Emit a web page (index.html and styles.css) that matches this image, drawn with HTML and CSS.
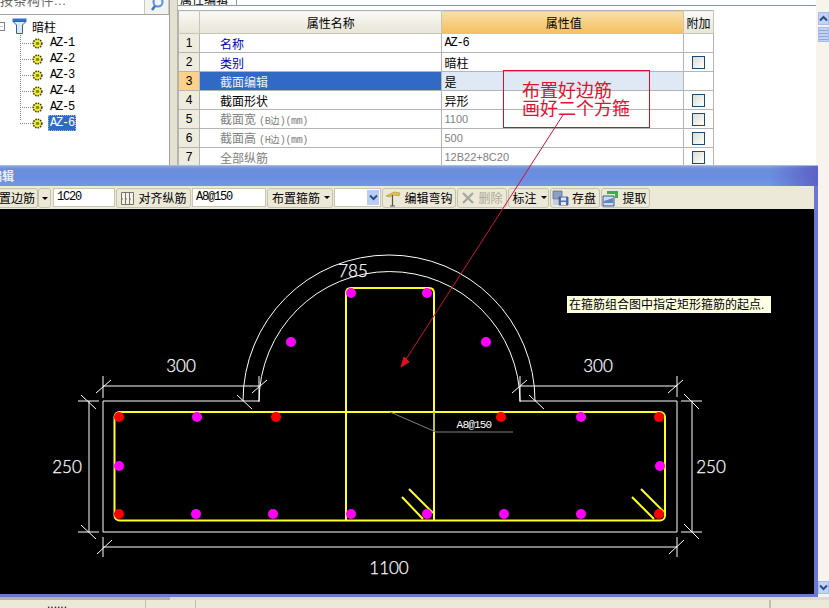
FILE: index.html
```html
<!DOCTYPE html>
<html lang="en">
<head>
    <meta charset="UTF-8">
    <title>截面编辑</title>
    <link rel="stylesheet" href="styles.css">
</head>
<body>
    <div class="page">
        <div class="main">
            <div class="top">
                <div class="tree-panel">
                    <div class="search">
                        <div class="search-input">按条构件...</div>
                        <div class="search-btn">
                            <svg width="16" height="14" viewBox="0 0 16 14"><circle cx="9" cy="2" r="4.5" fill="#eef4fc" stroke="#5a8fd0" stroke-width="2"/><path d="M6 6 L3 10" stroke="#3f74b8" stroke-width="2.5"/></svg>
                        </div>
                    </div>
                    <div class="tree">
                        <div class="tree-root">
                            <span class="expander"></span>
                            <svg class="funnel" width="15" height="16" viewBox="0 0 15 16"><path d="M0.5 0.5H14.5V3.5H0.5Z" fill="#2f74c8"/><path d="M1 3.5H14L10.5 7V15.5H4.5V7Z" fill="#dbe8f8" stroke="#2f5fa8"/></svg>
                            <span>暗柱</span>
                        </div>
                        <div class="tree-items">
                            <div class="tree-item"><svg class="gear" width="11" height="11" viewBox="0 0 11 11"><use href="#gear"/></svg><span class="az">AZ-1</span></div>
                            <div class="tree-item"><svg class="gear" width="11" height="11" viewBox="0 0 11 11"><use href="#gear"/></svg><span class="az">AZ-2</span></div>
                            <div class="tree-item"><svg class="gear" width="11" height="11" viewBox="0 0 11 11"><use href="#gear"/></svg><span class="az">AZ-3</span></div>
                            <div class="tree-item"><svg class="gear" width="11" height="11" viewBox="0 0 11 11"><use href="#gear"/></svg><span class="az">AZ-4</span></div>
                            <div class="tree-item"><svg class="gear" width="11" height="11" viewBox="0 0 11 11"><use href="#gear"/></svg><span class="az">AZ-5</span></div>
                            <div class="tree-item last"><svg class="gear" width="11" height="11" viewBox="0 0 11 11"><use href="#gear"/></svg><span class="az selected">AZ-6</span></div>
                        </div>
                    </div>
                </div>
                <div class="splitter"></div>
                <div class="props">
                    <div class="tabs"><div class="tab">属性编辑</div></div>
                    <table class="grid">
                        <tr class="head">
                            <th class="num"></th>
                            <th class="name">属性名称</th>
                            <th class="value active">属性值</th>
                            <th class="extra">附加</th>
                        </tr>
                        <tr class="link">
                            <td class="num">1</td><td class="name">名称</td><td class="value mono">AZ-6</td><td class="extra"></td>
                        </tr>
                        <tr class="link">
                            <td class="num">2</td><td class="name">类别</td><td class="value">暗柱</td><td class="extra"><span class="check"></span></td>
                        </tr>
                        <tr class="current">
                            <td class="num">3</td><td class="name">截面编辑</td><td class="value">是</td><td class="extra"></td>
                        </tr>
                        <tr>
                            <td class="num">4</td><td class="name">截面形状</td><td class="value">异形</td><td class="extra"><span class="check"></span></td>
                        </tr>
                        <tr class="off">
                            <td class="num">5</td><td class="name">截面宽<small>(B边)(mm)</small></td><td class="value plain">1100</td><td class="extra"><span class="check"></span></td>
                        </tr>
                        <tr class="off">
                            <td class="num">6</td><td class="name">截面高<small>(H边)(mm)</small></td><td class="value plain">500</td><td class="extra"><span class="check"></span></td>
                        </tr>
                        <tr class="off">
                            <td class="num">7</td><td class="name">全部纵筋</td><td class="value plain">12B22+8C20</td><td class="extra"><span class="check"></span></td>
                        </tr>
                    </table>
                </div>
            </div>

            <div class="editor">
                <div class="title"><span>编辑</span></div>
                <div class="toolbar">
                    <div class="btn b-first">布置边筋</div>
                    <div class="btn b-arrow"><i class="caret"></i></div>
                    <div class="field f-edge mono">1C20</div>
                    <div class="btn b-align">
                        <svg width="15" height="15" viewBox="0 0 15 15"><path d="M1.5 1.5H13.5V13.5H1.5ZM5.5 1.5V13.5M9.5 1.5V13.5" fill="#f4f2e8" stroke="#77756a"/><path d="M1 8H14" stroke="#77756a" stroke-dasharray="2 2"/></svg>
                        <span>对齐纵筋</span>
                    </div>
                    <div class="field f-stir mono">A8@150</div>
                    <div class="btn b-stir">布置箍筋<i class="caret"></i></div>
                    <div class="combo"><span class="combo-btn"><svg width="9" height="7" viewBox="0 0 9 7"><path d="M1 1.5L4.5 5L8 1.5" fill="none" stroke="#2b4d8c" stroke-width="2"/></svg></span></div>
                    <div class="btn b-hook">
                        <svg width="16" height="17" viewBox="0 0 16 17"><path d="M1 6L9 2L15 3L14 6L9 5L4 7Z" fill="#e0c050" stroke="#a8903c" stroke-width=".6"/><path d="M7.5 5V16M5 16H10" stroke="#55554c" stroke-width="1.2"/></svg>
                        <span>编辑弯钩</span>
                    </div>
                    <div class="btn b-del disabled">
                        <svg width="14" height="14" viewBox="0 0 14 14"><path d="M2 2L12 12M12 2L2 12" stroke="#a8a89c" stroke-width="2.4"/></svg>
                        <span>删除</span>
                    </div>
                    <div class="btn b-mark">标注<i class="caret"></i></div>
                    <div class="btn b-save">
                        <svg width="17" height="16" viewBox="0 0 17 16"><path d="M1 1H10V9H1Z" fill="#8f9fc4" stroke="#5c6f9c" stroke-width=".8"/><path d="M7 7H16V15H7Z" fill="#4f72b8" stroke="#3b5a98" stroke-width=".8"/><path d="M9 7.5H14V10.5H9ZM9 12H14V15H9Z" fill="#e4e8f2"/><path d="M1 10H6V15H1Z" fill="#c4cde2"/></svg>
                        <span>存盘</span>
                    </div>
                    <div class="btn b-load">
                        <svg width="17" height="17" viewBox="0 0 17 17"><path d="M5 1H16L13 4H5Z" fill="#3fae4a"/><path d="M13 1H16V8H13Z" fill="#3fae4a"/><path d="M1 6H12V16H1Z" fill="#cfdcef" stroke="#3b5a8c"/><path d="M2 11L11 8V13H2Z" fill="#5f86bf"/></svg>
                        <span>提取</span>
                    </div>
                </div>
                <div class="canvas">
                    <svg class="drawing" width="814" height="385" viewBox="0 209 814 385">
                        <g class="outline">
                            <path d="M259 402A130.500 130.500 0 0 1 520 402"/>
                            <path d="M243 401A146 146 0 0 1 535 401"/>
                            <path d="M259 376V401H103V532H677V401H520V376"/>
                            <path d="M103 376V398M96 393L111 380M103 386H260M252 393L267 380M237 395L252 409"/>
                            <path d="M520 386H677M677 376V397M668 393L683 380M512 393L527 380M529 395L544 409"/>
                            <path d="M78 401H99M89 401V532M78 532H99M81 395L96 409M81 525L96 539"/>
                            <path d="M681 401H702M692 401V532M681 532H702M684 394L699 409M684 524L699 539"/>
                            <path d="M103 537V557M677 537V557M103 547H677M97 554L112 540M669 554L684 540"/>
                        </g>
                        <g class="stirrup">
                            <rect x="114.500" y="412" width="550.500" height="108.500" rx="5"/>
                            <path d="M346 521V293Q346 288 351 288H429Q434 288 434 293V521"/>
                            <path d="M409 489L433 513M402 497L423 519M641 489L664 512M632 497L654 519"/>
                        </g>
                        <path class="leader" d="M390 412L436 432H513M434 412V432"/>
                        <g class="bar-side">
                            <circle cx="351" cy="293" r="5"/><circle cx="427" cy="293" r="5"/>
                            <circle cx="291" cy="342" r="5"/><circle cx="486" cy="342" r="5"/>
                            <circle cx="197" cy="417" r="5"/><circle cx="581" cy="417" r="5"/>
                            <circle cx="119" cy="466" r="5"/><circle cx="660" cy="466" r="5"/>
                            <circle cx="196" cy="514" r="5"/><circle cx="273" cy="514" r="5"/>
                            <circle cx="351" cy="514" r="5"/><circle cx="427" cy="514" r="5"/>
                            <circle cx="504" cy="514" r="5"/><circle cx="581" cy="514" r="5"/>
                        </g>
                        <g class="bar-corner">
                            <circle cx="119" cy="417" r="5"/><circle cx="276" cy="417" r="5"/>
                            <circle cx="501" cy="417" r="5"/><circle cx="659" cy="417" r="5"/>
                            <circle cx="119" cy="514" r="5"/><circle cx="659" cy="514" r="5"/>
                        </g>
                        <g class="dim">
                            <text x="353" y="277">785</text>
                            <text x="181" y="372">300</text>
                            <text x="598" y="372">300</text>
                            <text x="67" y="473">250</text>
                            <text x="711" y="473">250</text>
                            <text x="389" y="574">1100</text>
                        </g>
                        <text class="dim-small" x="474" y="428">A8@150</text>
                    </svg>
                    <div class="tip">在箍筋组合图中指定矩形箍筋的起点.</div>
                </div>
            </div>
        </div>
        <div class="vscroll">
            <div class="vscroll-top">
                <div class="sb-btn"><svg width="9" height="7" viewBox="0 0 9 7"><path d="M1 5.500L4.500 2L8 5.500" fill="none" stroke="#2b4d8c" stroke-width="2"/></svg></div>
                <div class="sb-thumb"></div>
            </div>
            <div class="sb-btn"><svg width="9" height="7" viewBox="0 0 9 7"><path d="M1 1.500L4.500 5L8 1.500" fill="none" stroke="#2b4d8c" stroke-width="2"/></svg></div>
        </div>
    </div>
    <div class="status">
        <div class="status-cell s1"><span>......</span></div>
        <div class="status-cell s2"></div>
        <div class="status-cell s3"></div>
        <div class="status-cell s4"></div>
    </div>

    <svg class="hidden-defs" width="0" height="0">
        <symbol id="gear" viewBox="0 0 11 11">
            <circle cx="5.500" cy="5.500" r="4.300" fill="#f4f03c" stroke="#3c3c10" stroke-width="1.600" stroke-dasharray="1.500 1"/>
            <circle cx="5.500" cy="5.500" r="1.800" fill="#8c8c20"/>
        </symbol>
    </svg>

    <div class="note">布置好边筋<br>画好二个方箍</div>
    <svg class="note-arrow" width="829" height="608" viewBox="0 0 829 608">
        <path d="M563 115L403 364" fill="none" stroke="#d01030" stroke-width="1"/>
        <path d="M401 367L404 357L409 362Z" fill="#e01020" stroke="#e01020"/>
    </svg>
</body>
</html>
```

FILE: styles.css
```css
* {
    box-sizing: border-box;
}

html, body {
    margin: 0;
    height: 100%;
}

body {
    position: relative;
    width: 829px;
    height: 608px;
    overflow: hidden;
    background: #ece9d8;
    font-family: "Liberation Sans", "Noto Sans CJK SC", sans-serif;
    font-size: 12px;
    color: #000;
}

.mono {
    font-family: "Liberation Mono", monospace;
    letter-spacing: -1.2px;
}

.page {
    display: flex;
    height: 597px;
}

.main {
    width: 818px;
    display: flex;
    flex-direction: column;
    background: #f6f4ec;
}

/* top part */
.top {
    display: flex;
    height: 165px;
    overflow: hidden;
}

.tree-panel {
    width: 170px;
    background: #fff;
    border-right: 1px solid #a0a0a0;
}

.search {
    display: flex;
    height: 15px;
    border-bottom: 1px solid #a3a3a3;
    overflow: hidden;
}

.search-input {
    width: 145px;
    margin-top: -9px;
    color: #666;
    font-size: 13px;
    letter-spacing: 0.5px;
    line-height: 20px;
    border-right: 1px solid #c8c8c8;
    white-space: nowrap;
}

.search-btn {
    flex: 1;
    background: #f3f3ee;
    padding-left: 4px;
    border-right: 1px solid #c8c8c8;
}

.tree {
    padding-top: 3px;
}

.tree-root {
    display: flex;
    align-items: center;
    height: 16px;
    margin-bottom: 1px;
}

.expander {
    width: 5px;
    height: 9px;
    border: 1px solid #808080;
    border-left: 0;
    background: linear-gradient(#c8c8c8, #c8c8c8) no-repeat 0 3px / 3px 1px;
    margin-right: 7px;
}

.funnel {
    margin-right: 5px;
}

.tree-items {
    margin-left: 20px;
    height: 88px;
    background: repeating-linear-gradient(#888 0, #888 1px, #fff 1px, #fff 2px) no-repeat 0 0 / 1px 86px;
}

.tree-item {
    display: flex;
    align-items: center;
    height: 16px;
    padding-left: 12px;
    background: repeating-linear-gradient(90deg, #888 0, #888 1px, #fff 1px, #fff 2px) no-repeat 0 8px / 12px 1px;
}

.tree-item .gear {
    margin-right: 5px;
    background: #fff;
}

.az {
    font-family: "Liberation Mono", monospace;
    letter-spacing: -1.2px;
    padding: 0 2px;
    line-height: 16px;
}

.az.selected {
    background: #316ac5;
    color: #fff;
    outline: 1px dotted #9fb6dc;
    outline-offset: -1px;
}

.splitter {
    width: 8px;
    background: #e4e1d0;
    border-right: 1px solid #b8b5a4;
}

.props {
    flex: 1;
    margin-right: 2px;
    background: #fff;
    overflow: hidden;
}

.tabs {
    height: 6px;
    border-bottom: 1px solid #8a9aa4;
    margin-bottom: 4px;
    overflow: hidden;
}

.tab {
    width: 59px;
    height: 5px;
    line-height: 0;
    padding-left: 2px;
    border-right: 1px solid #8a9aa4;
    background: #fff;
    overflow: hidden;
}

.grid {
    width: 536px;
    table-layout: fixed;
    border-collapse: collapse;
    border-top: 1px solid #aeb4b8;
    border-left: 1px solid #aeb4b8;
}

.grid th, .grid td {
    height: 19px;
    padding: 0;
    border-right: 1px solid #b4b4b4;
    border-bottom: 1px solid #b4b4b4;
    font-weight: normal;
    white-space: nowrap;
    overflow: hidden;
}

.grid .head th {
    height: 23px;
    text-align: center;
    background: linear-gradient(#faf9f5, #e7e5d6);
    border-color: #c8c6b8;
}

.grid .head th.active {
    background: linear-gradient(#fbe0a8, #f4bf5f);
}

.grid .num {
    width: 21px;
    text-align: center;
    background: #eeecdf;
}

.grid .name {
    width: 242px;
    padding-left: 20px;
    text-align: left;
}

.grid .value {
    width: 241px;
    padding-left: 2px;
}

.grid .value.plain {
    font-size: 11px;
}

.grid .extra {
    width: 30px;
    text-align: center;
}

.grid .head .extra {
    background: linear-gradient(#faf9f5, #e7e5d6);
}

.link .name {
    color: #0000b0;
}

.current .num {
    background: #fcd28a;
}

.current .name {
    background: #316ac5;
    color: #f0f0f0;
}

.current .value {
    background: #dfe8f5;
}

.off .name, .off .value {
    color: #808080;
}

.off small {
    margin-left: 3px;
    font-size: 10px;
    font-family: "Liberation Mono", monospace;
    letter-spacing: -0.4px;
}

.check {
    display: block;
    width: 13px;
    height: 13px;
    margin: 0 auto;
    border: 1px solid #1c4a70;
    background: linear-gradient(135deg, #dcdcd2, #fff);
}

/* editor window */
.editor {
    flex: 1;
    display: flex;
    flex-direction: column;
    background: #ece9d8;
    border-right: 4px solid #6b78d0;
    border-bottom: 3px solid #6b78d0;
}

.title {
    height: 21px;
    margin-right: -4px;
    padding-left: 2px;
    overflow: hidden;
    background:
        linear-gradient(90deg, rgba(88, 80, 190, 0) 770px, rgba(88, 80, 190, 0.75) 818px),
        linear-gradient(#8aa6e0 0, #6c8ddc 3px, #6a8edf 60%, #7596e2);
    border-top: 1px solid #a7bce2;
    color: #e6eeff;
    font-weight: bold;
    line-height: 22px;
}

.title span {
    display: inline-block;
    margin-left: -12px;
}

.toolbar {
    display: flex;
    gap: 1px;
    height: 23px;
    padding-top: 2px;
    overflow: hidden;
}

.btn {
    display: flex;
    align-items: center;
    justify-content: center;
    gap: 3px;
    height: 20px;
    padding-bottom: 2px;
    border: 1px solid #c5c2b0;
    border-radius: 3px;
    background: #ece9d8;
    flex-shrink: 0;
    white-space: nowrap;
}

.btn svg {
    margin-top: 2px;
}

.caret {
    display: inline-block;
    margin-left: 4px;
    border: 3px solid transparent;
    border-top: 3px solid #000;
    border-bottom: 0;
}

.b-first {
    margin-left: -13px;
    width: 51px;
    justify-content: flex-end;
    padding-right: 2px;
    border-left: 0;
}

.b-arrow {
    width: 13px;
    margin-left: -1px;
    padding-bottom: 0;
}

.b-arrow .caret {
    margin-left: 0;
}

.field {
    height: 19px;
    padding-left: 3px;
    line-height: 16px;
    background: #fff;
    border: 1px solid #c9c6b4;
    flex-shrink: 0;
}

.f-edge {
    width: 62px;
    margin-left: 1px;
}

.f-stir {
    width: 74px;
}

.b-align {
    width: 75px;
}

.b-stir {
    width: 66px;
    padding-left: 2px;
}

.b-stir .caret, .b-mark .caret {
    margin-left: 1px;
}

.combo {
    display: flex;
    justify-content: flex-end;
    width: 47px;
    height: 19px;
    padding: 1px;
    background: #fff;
    border: 1px solid #c9c6b4;
}

.combo-btn {
    display: flex;
    align-items: center;
    justify-content: center;
    width: 12px;
    background: #b9cdf2;
}

.b-hook {
    width: 74px;
}

.b-del {
    width: 50px;
}

.disabled {
    color: #aca899;
}

.b-mark {
    width: 41px;
    padding-left: 2px;
}

.b-save {
    width: 50px;
    padding-right: 2px;
}

.b-load {
    width: 49px;
    padding-right: 2px;
}

.canvas {
    position: relative;
    flex: 1;
    background: #000;
    overflow: hidden;
}

.drawing {
    display: block;
}

.outline {
    fill: none;
    stroke: #fff;
    stroke-width: 1;
}

.stirrup {
    fill: none;
    stroke: #ffff20;
    stroke-width: 2;
}

.leader {
    fill: none;
    stroke: #808080;
}

.bar-side {
    fill: #ff00ff;
}

.bar-corner {
    fill: #ff0000;
}

.dim {
    fill: #fff;
    stroke: #fff;
    stroke-width: 0.25;
    font-family: "Lato", "Liberation Sans", sans-serif;
    font-weight: 300;
    font-size: 17px;
    text-anchor: middle;
}

.dim-small {
    fill: #fff;
    font-family: "Liberation Mono", monospace;
    font-size: 11px;
    letter-spacing: -0.8px;
    text-anchor: middle;
}

.tip {
    position: absolute;
    left: 567px;
    top: 87px;
    width: 204px;
    height: 17px;
    padding-left: 2px;
    background: #ffffe1;
    line-height: 18px;
    white-space: nowrap;
}

/* right scrollbar */
.vscroll {
    flex: 1;
    display: flex;
    flex-direction: column;
    justify-content: space-between;
    padding: 12px 0 3px;
    background: #f6f4ec;
}

.sb-btn {
    display: flex;
    align-items: center;
    justify-content: center;
    height: 13px;
    background: #c3d3f5;
    border: 1px solid #a8bce8;
}

.sb-thumb {
    height: 15px;
    margin-top: 2px;
    background: repeating-linear-gradient(#c3d3f5 0, #c3d3f5 2px, #8ea4d8 2px, #8ea4d8 3px);
    border: 1px solid #a8bce8;
}

/* status bar */
.status {
    display: flex;
    height: 11px;
    padding-top: 3px;
    background:
        linear-gradient(#b4b2a6, #b4b2a6) no-repeat 0 0 / 170px 3px,
        linear-gradient(#dedbca, #dedbca) no-repeat 0 0 / 100% 3px,
        #ece9d8;
    overflow: hidden;
}

.status-cell {
    border-right: 1px solid #c2bfae;
}

.s1 {
    width: 146px;
    padding-left: 47px;
    line-height: 8px;
}

.s2 {
    width: 50px;
}

.s3 {
    width: 574px;
}

.hidden-defs {
    position: absolute;
}

/* red note drawn over the window */
.note {
    position: absolute;
    left: 503px;
    top: 70px;
    width: 147px;
    height: 58px;
    padding: 11px 0 0 18px;
    border: 1px solid #d01030;
    color: #e01030;
    font-size: 18px;
    line-height: 18px;
}

.note-arrow {
    position: absolute;
    left: 0;
    top: 0;
}
```
